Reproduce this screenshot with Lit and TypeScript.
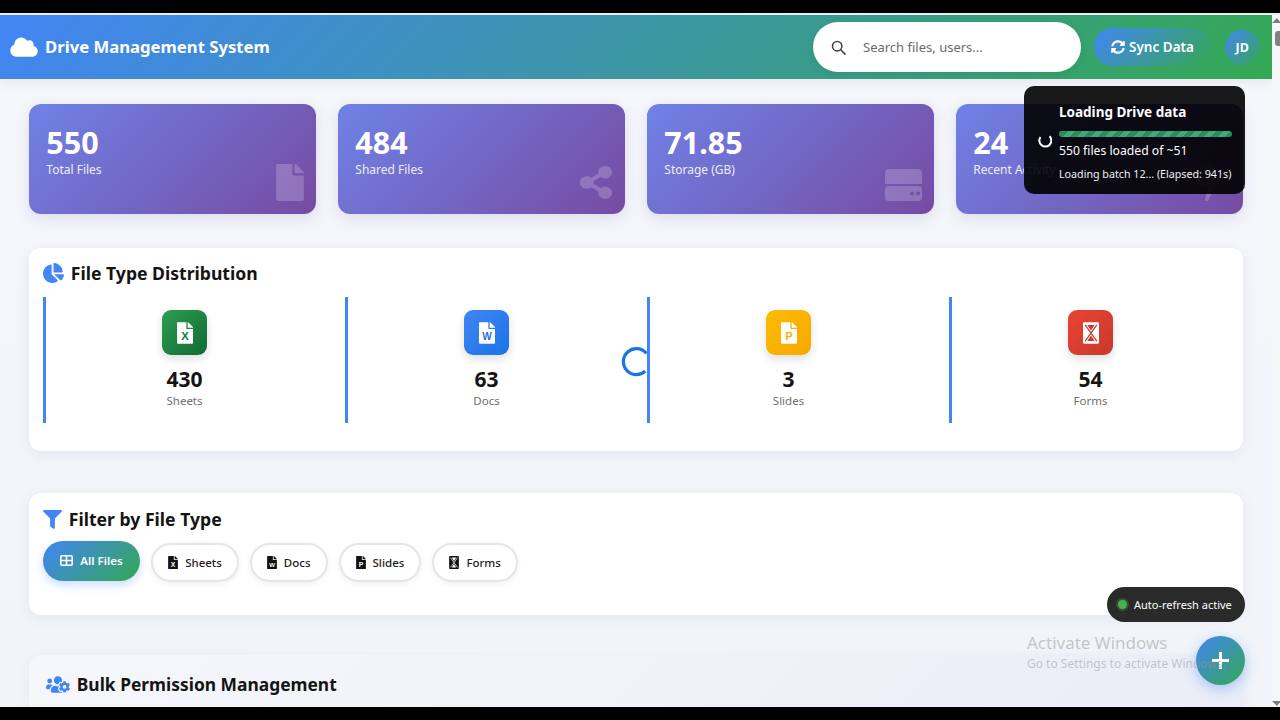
import { LitElement, html, css, svg } from "lit";
import { customElement } from "lit/decorators.js";

const FILE = "M224 136V0H24C10.7 0 0 10.7 0 24v464c0 13.3 10.7 24 24 24h336c13.3 0 24-10.7 24-24V160H248c-13.2 0-24-10.8-24-24zm160-14.1v6.1H256V0h6.1c6.4 0 12.5 2.5 17 7l97.9 98c4.5 4.5 7 10.6 7 16.9z";
const SHARE = "M352 320c-22.608 0-43.387 7.819-59.79 20.895l-102.486-64.054a96.551 96.551 0 0 0 0-41.683l102.486-64.054C308.613 184.181 329.392 192 352 192c53.019 0 96-42.981 96-96S405.019 0 352 0s-96 42.981-96 96c0 7.158.79 14.13 2.276 20.841L155.79 180.895C139.387 167.819 118.608 160 96 160c-53.019 0-96 42.981-96 96s42.981 96 96 96c22.608 0 43.387-7.819 59.79-20.895l102.486 64.054A96.301 96.301 0 0 0 256 416c0 53.019 42.981 96 96 96s96-42.981 96-96-42.981-96-96-96z";
const CLOUD = "M537.6 226.6c4.1-10.7 6.4-22.4 6.4-34.6 0-53-43-96-96-96-19.7 0-38.1 6-53.3 16.2C367 64.2 315.3 32 256 32c-88.4 0-160 71.6-160 160 0 2.7.1 5.4.2 8.1C40.2 219.8 0 273.2 0 336c0 79.5 64.5 144 144 144h368c70.7 0 128-57.3 128-128 0-61.9-44-113.6-102.4-125.4z";
const SYNC = "M370.72 133.28C339.458 104.008 298.888 87.962 255.848 88c-77.458.068-144.328 53.178-162.791 126.85-1.344 5.363-6.122 9.15-11.651 9.15H24.103c-7.498 0-13.194-6.807-11.807-14.176C33.933 94.924 134.813 8 256 8c66.448 0 126.791 26.136 171.315 68.685L463.03 40.97C478.149 25.851 504 36.559 504 57.941V192c0 13.255-10.745 24-24 24H345.941c-21.382 0-32.09-25.851-16.971-40.971l41.75-41.749zM32 296h134.059c21.382 0 32.09 25.851 16.971 40.971l-41.75 41.75c31.262 29.273 71.835 45.319 114.876 45.28 77.418-.07 144.315-53.144 162.787-126.849 1.344-5.363 6.122-9.15 11.651-9.15h57.304c7.498 0 13.194 6.807 11.807 14.176C478.067 417.076 377.187 504 256 504c-66.448 0-126.791-26.136-171.315-68.685L48.97 471.03C33.851 486.149 8 475.441 8 454.059V320c0-13.255 10.745-24 24-24z";
const PIE = "M527.79 288H290.5l158.03 158.03c6.04 6.04 15.98 6.53 22.19 .68 38.7-36.46 65.32-85.61 73.13-140.86 1.34-9.46-6.51-17.85-16.06-17.85zm-15.83-64.8C503.72 103.74 408.26 8.28 288.8 .04 279.68-.59 272 7.1 272 16.24V240h223.77c9.14 0 16.82-7.68 16.19-16.8zM224 288V50.71c0-9.55-8.39-17.4-17.84-16.06C86.99 51.49-4.1 155.6 .14 280.37 4.5 408.51 114.83 513.59 243.03 511.98c50.4-.63 96.97-16.87 135.26-44.03 7.9-5.6 8.42-17.23 1.57-24.08L224 288z";
const FILTER = "M487.976 0H24.028C2.71 0-8.047 25.866 7.058 40.971L192 225.941V432c0 7.831 3.821 15.17 10.237 19.662l80 55.98C298.02 518.69 320 507.493 320 487.98V225.941l184.947-184.97C520.021 25.896 509.338 0 487.976 0z";
const USERS = "M610.5 341.3c2.6-14.1 2.6-28.5 0-42.6l25.8-14.9c3-1.7 4.3-5.2 3.3-8.5-6.7-21.6-18.2-41.2-33.2-57.4-2.3-2.5-6-3.1-9-1.4l-25.8 14.9c-10.9-9.3-23.4-16.5-36.9-21.3v-29.8c0-3.4-2.4-6.4-5.7-7.1-22.3-5-45-4.8-66.2 0-3.3.7-5.7 3.7-5.7 7.1v29.8c-13.5 4.8-26 12-36.9 21.3l-25.8-14.9c-2.9-1.7-6.7-1.1-9 1.4-15 16.2-26.5 35.8-33.2 57.4-1 3.3.4 6.8 3.3 8.5l25.8 14.9c-2.6 14.1-2.6 28.5 0 42.6l-25.8 14.9c-3 1.7-4.3 5.2-3.3 8.5 6.7 21.6 18.2 41.1 33.2 57.4 2.3 2.5 6 3.1 9 1.4l25.8-14.9c10.9 9.3 23.4 16.5 36.9 21.3v29.8c0 3.4 2.4 6.4 5.7 7.1 22.3 5 45 4.8 66.2 0 3.3-.7 5.7-3.7 5.7-7.1v-29.8c13.5-4.8 26-12 36.9-21.3l25.8 14.9c2.9 1.7 6.7 1.1 9-1.4 15-16.2 26.5-35.8 33.2-57.4 1-3.3-.4-6.8-3.3-8.5l-25.8-14.9zM496 368.5c-26.8 0-48.5-21.8-48.5-48.5s21.8-48.5 48.5-48.5 48.5 21.8 48.5 48.5-21.7 48.5-48.5 48.5zM96 224c35.3 0 64-28.7 64-64s-28.7-64-64-64-64 28.7-64 64 28.7 64 64 64zm224 32c1.9 0 3.7-.5 5.6-.6 8.3-21.7 20.5-42.1 36.3-59.2 7.4-8 17.9-12.6 28.9-12.6 6.9 0 13.7 1.8 19.6 5.3l7.9 4.6c.8-.5 1.6-.9 2.4-1.4 7-14.6 11.2-30.8 11.2-48 0-61.9-50.1-112-112-112S208 82.1 208 144c0 61.9 50.1 112 112 112zm105.2 194.5c-2.3-1.2-4.6-2.6-6.8-3.9-8.2 4.8-15.3 9.8-27.5 9.8-10.9 0-21.4-4.6-28.9-12.6-18.3-19.8-32.3-43.9-40.2-69.6-10.7-34.5 24.9-49.7 25.8-50.3-.1-2.6-.1-5.2 0-7.8l-7.9-4.6c-3.8-2.2-7-5-9.8-8.1-3.3.2-6.5.6-9.8.6-24.6 0-47.6-6-68.5-16h-8.3C179.6 288 128 339.6 128 403.2V432c0 26.5 21.5 48 48 48h255.4c-3.7-6-6.2-12.8-6.2-20.3v-9.2zM173.1 274.6C161.5 263.1 145.6 256 128 256H64c-35.3 0-64 28.7-64 64v32c0 17.7 14.3 32 32 32h65.9c6.3-47.4 34.9-87.3 75.2-109.4z";
const BOLT = "M296 160H180.6l42.6-129.8C227.2 15 215.7 0 200 0H56C44 0 33.8 8.9 32.2 20.8l-32 240C-2.7 278.9 11.3 295 24 295h118.7L96.6 489.7c-3.6 15.2 8 22.3 23.3 22.3 8.4 0 16.4-4.4 20.8-12l176-304c9.3-15.9-2.2-36-20.7-36z";

type Kind = "x" | "w" | "p" | "f";

function mark(kind: Kind, color: string) {
  if (kind === "f") {
    return svg`<path d="M104 62h176l-88 132zM104 450h176l-88-132z" fill="${color}"/><path d="M52 62l280 388M332 62L52 450" stroke="${color}" stroke-width="30"/>`;
  }
  const ch = kind === "x" ? "X" : kind === "w" ? "W" : "P";
  return svg`<text x="192" y="430" text-anchor="middle" font-family="'Liberation Sans',sans-serif" font-weight="700" font-size="${kind === "w" ? 240 : 270}" fill="${color}">${ch}</text>`;
}

function docIcon(kind: Kind, sheet: string, ink: string, cls: string) {
  if (kind === "f") {
    return html`<svg class="${cls}" viewBox="0 0 384 512"><rect width="384" height="512" rx="28" fill="${sheet}"/>${mark(kind, ink)}</svg>`;
  }
  return html`<svg class="${cls}" viewBox="0 0 384 512"><path d="${FILE}" fill="${sheet}"/>${mark(kind, ink)}</svg>`;
}

const STATS = [
  { value: "550", label: "Total Files", icon: "file" },
  { value: "484", label: "Shared Files", icon: "share" },
  { value: "71.85", label: "Storage (GB)", icon: "hdd" },
  { value: "24", label: "Recent Activity", icon: "bolt" },
];

const DIST: { kind: Kind; n: string; label: string; cls: string; ink: string }[] = [
  { kind: "x", n: "430", label: "Sheets", cls: "sheets", ink: "#157a3c" },
  { kind: "w", n: "63", label: "Docs", cls: "docs", ink: "#2a6fe0" },
  { kind: "p", n: "3", label: "Slides", cls: "slides", ink: "#f6b400" },
  { kind: "f", n: "54", label: "Forms", cls: "forms", ink: "#c8392b" },
];

const FILTERS: { kind: Kind; label: string }[] = [
  { kind: "x", label: "Sheets" },
  { kind: "w", label: "Docs" },
  { kind: "p", label: "Slides" },
  { kind: "f", label: "Forms" },
];

@customElement("app-root")
export class AppRoot extends LitElement {
  static styles = css`
    :host {
      display: block;
      width: 1280px;
      height: 720px;
      position: relative;
      overflow: hidden;
      background: #000;
      font-family: "Noto Sans", "Open Sans", sans-serif;
      color: #111;
    }
    * { box-sizing: border-box; }
    .frame { display: flex; flex-direction: column; height: 720px; padding: 13px 0; }
    .frame-line { height: 2px; background: #e9edf2; flex: none; }
    .window { flex: 1; min-height: 0; display: flex; overflow: hidden; background: #f5f7fa; }
    .page { width: 1272px; flex: none; overflow: hidden; background: linear-gradient(180deg, #f5f7fa 0%, #f2f4fa 100%); }
    .scrollbar {
      flex: 1; background: #f6f7f8; display: flex; flex-direction: column;
      align-items: flex-end; padding-top: 3px;
    }
    .sb-up {
      width: 0; height: 0; margin-right: -1px;
      border-left: 5px solid transparent; border-right: 4px solid transparent; border-bottom: 5px solid #7d7d7d;
    }
    .sb-thumb { width: 5px; height: 15px; margin-top: 8px; background: #828282; border-radius: 3px 0 0 3px; }
    .sb-space { flex: 1; }
    .sb-down {
      width: 0; height: 0; margin-right: -1px; margin-bottom: 1px;
      border-left: 5px solid transparent; border-right: 4px solid transparent; border-top: 5px solid #7d7d7d;
    }

    header {
      height: 64px; display: flex; align-items: center; padding: 0 12.5px 0 10px;
      background: linear-gradient(135deg, #4285f4 0%, #34a853 100%);
      box-shadow: 0 2px 12px rgba(0, 0, 0, 0.08);
    }
    .brand { display: flex; align-items: center; gap: 7px; color: #fff; font-size: 16.7px; font-weight: 700; flex: 1; }
    .brand span { margin-top: -1px; }
    .brand svg { width: 28px; height: 22px; fill: #fff; }
    .search {
      width: 268px; height: 50px; border-radius: 25px; background: #fff; display: flex; align-items: center;
      padding-left: 18px; gap: 17px; color: #6b6b6b; font-size: 13px;
      box-shadow: 0 2px 8px rgba(0, 0, 0, 0.08);
    }
    .search svg { width: 15px; height: 15px; flex: none; }
    .sync {
      margin-left: 13px; width: 117px; height: 38px; border-radius: 19px; display: flex; align-items: center;
      justify-content: center; gap: 4px; color: #fff; font-size: 13.5px; font-weight: 600;
      background: linear-gradient(135deg, #4285f4 0%, #34a853 100%);
    }
    .sync svg { width: 14px; height: 14px; fill: #fff; }
    .avatar {
      margin-left: 14px; width: 34.5px; height: 35px; border-radius: 50%; display: flex; align-items: center;
      justify-content: center; color: #fff; font-size: 12.5px; font-weight: 700;
      background: linear-gradient(135deg, #4285f4 0%, #34a853 100%);
    }

    main { padding: 25px 28.8px 0; }
    .stats { display: grid; grid-template-columns: repeat(4, 1fr); gap: 21.6px; margin-bottom: 34px; }
    .stat {
      position: relative; height: 110px; border-radius: 12px; padding: 18.5px 17.5px; color: #fff;
      background: linear-gradient(135deg, #6f82e6 0%, #764ba2 100%);
      box-shadow: 0 4px 14px rgba(110, 100, 200, 0.18);
    }
    .stat-value { font-size: 30.5px; font-weight: 700; line-height: 38px; }
    .stat-label { font-size: 12px; line-height: 16px; margin-top: 1.5px; opacity: 0.88; }
    .stat-icon { position: absolute; right: 12px; bottom: 13px; fill: rgba(255, 255, 255, 0.2); display: block; }
    .stat-icon.file { width: 28px; height: 37px; }
    .stat-icon.share { width: 32px; height: 33px; bottom: 15px; right: 13px; }
    .stat-icon.hdd { width: 37px; height: 32px; }
    .stat-icon.bolt { width: 23px; height: 36px; right: 22px; }

    .panel {
      background: #fff; border-radius: 12px; padding: 14px;
      box-shadow: 0 3px 14px rgba(30, 40, 80, 0.07);
    }
    .title { display: flex; align-items: center; font-size: 17.6px; font-weight: 700; color: #141414; line-height: 24px; }
    .title svg { fill: #4285f4; flex: none; }
    .dist-panel { height: 203px; margin-bottom: 42px; padding-top: 13px; }
    .dist-title { gap: 7px; margin-bottom: 12px; }
    .dist-title svg { width: 21px; height: 20px; }
    .dist { display: grid; grid-template-columns: repeat(4, 1fr); gap: 21.6px; }
    .dist-item {
      height: 126px; border-left: 3px solid #4285f4; display: flex; flex-direction: column; align-items: center;
      padding-top: 13px;
    }
    .tile {
      width: 45px; height: 45px; border-radius: 9px; display: flex; align-items: center; justify-content: center;
      box-shadow: 0 4px 10px rgba(0, 0, 0, 0.13);
    }
    .tile.sheets { background: linear-gradient(135deg, #2f9d50, #0f6a34); }
    .tile.docs { background: linear-gradient(135deg, #4285f4, #1a73e8); }
    .tile.slides { background: linear-gradient(135deg, #fbbc04, #f9a800); }
    .tile.forms { background: linear-gradient(135deg, #ea4335, #c8392b); }
    .tile-doc { width: 16px; height: 22px; display: block; }
    .count { font-size: 21px; font-weight: 700; line-height: 28px; margin-top: 10px; color: #151515; }
    .count-label { font-size: 11.5px; line-height: 15px; color: #6f6f6f; }

    .filter-panel { height: 122px; margin-bottom: 40px; }
    .filter-title { gap: 7px; margin-bottom: 10px; }
    .filter-title svg { width: 19px; height: 19px; }
    .chips { display: flex; align-items: center; gap: 11px; }
    .chip {
      height: 39px; border-radius: 20px; border: 2px solid #e6e6e6; background: #fff; display: flex; align-items: center;
      gap: 7px; padding: 0 15px; font-size: 11.5px; font-weight: 500; color: #1d1d1d;
      box-shadow: 0 2px 6px rgba(0, 0, 0, 0.06); margin-top: 2px;
    }
    .chip-doc { width: 10px; height: 13px; display: block; }
    .chip.active {
      height: 40px; margin-top: -2px; border: 0; padding: 0 17.5px; gap: 7px; color: #fff; font-weight: 600;
      background: linear-gradient(135deg, #4285f4 0%, #34a853 100%);
      box-shadow: 0 4px 10px rgba(66, 133, 244, 0.28);
    }
    .chip.active svg { width: 13px; height: 11px; display: block; }

    .bulk {
      height: 90px; border-radius: 12px; padding: 17px 17px;
      background: linear-gradient(135deg, #f6f7fb 0%, #eaedf7 100%);
      box-shadow: 0 3px 14px rgba(30, 40, 80, 0.05);
    }
    .bulk-title { gap: 7px; font-size: 17.4px; }
    .bulk-title svg { width: 24px; height: 19px; }

    .spinner { position: absolute; left: 621px; top: 347px; width: 30px; height: 30px; display: block; }
    .toast {
      position: absolute; left: 1024px; top: 86px; width: 221px; height: 108px; border-radius: 10px; color: #fff;
      background: rgba(0, 0, 0, 0.9); display: flex; align-items: center; gap: 7px; padding: 5px 13px 0 14px;
    }
    .toast-spin { width: 14px; height: 14px; flex: none; display: block; margin-top: -3px; }
    .toast-body { flex: 1; min-width: 0; }
    .toast-title { font-size: 13.5px; font-weight: 700; line-height: 18px; margin-bottom: 10px; }
    .bar {
      height: 5.5px; border-radius: 3px; margin-bottom: 5px;
      background: repeating-linear-gradient(-45deg, #23905a 0 5px, #46a67f 5px 10px);
    }
    .toast-line { font-size: 12.2px; line-height: 18px; margin-bottom: 6px; }
    .toast-sub { font-size: 10.7px; line-height: 16px; opacity: 0.95; white-space: nowrap; }

    .auto {
      position: absolute; left: 1107px; top: 587px; width: 138px; height: 35px; border-radius: 18px;
      background: #2a2a2a; color: #fff; font-size: 11px; display: flex; align-items: center; gap: 7px; padding-left: 11px;
      white-space: nowrap;
    }
    .dot { width: 9px; height: 9px; border-radius: 50%; background: #4caf50; box-shadow: 0 0 0 2px rgba(76, 175, 80, 0.3); flex: none; }
    .fab {
      position: absolute; left: 1196px; top: 636px; width: 49px; height: 49px; border-radius: 50%;
      background: linear-gradient(135deg, #4285f4 0%, #34a853 100%); display: flex; align-items: center; justify-content: center;
      box-shadow: 0 4px 14px rgba(66, 133, 244, 0.4);
    }
    .fab svg { width: 17px; height: 17px; display: block; }
    .activate { position: absolute; left: 1027px; top: 632px; color: rgba(150, 150, 150, 0.5); pointer-events: none; white-space: nowrap; }
    .activate-1 { font-size: 17px; line-height: 22px; }
    .activate-2 { font-size: 12px; line-height: 16px; margin-top: 2px; }
  `;

  private statIcon(kind: string) {
    if (kind === "file") return html`<svg class="stat-icon file" viewBox="0 0 384 512"><path d="${FILE}"/></svg>`;
    if (kind === "share") return html`<svg class="stat-icon share" viewBox="0 0 448 512" preserveAspectRatio="none"><path d="${SHARE}"/></svg>`;
    if (kind === "hdd")
      return html`<svg class="stat-icon hdd" viewBox="0 0 37 32">
        <path d="M4 0h29a4 4 0 0 1 4 4v11H0V4a4 4 0 0 1 4-4z"/>
        <path fill-rule="evenodd" d="M4 17h29a4 4 0 0 1 4 4v7a4 4 0 0 1-4 4H4a4 4 0 0 1-4-4v-7a4 4 0 0 1 4-4zm21 7.5a2 2 0 1 0 4 0 2 2 0 1 0-4 0zm6 0a2 2 0 1 0 4 0 2 2 0 1 0-4 0z"/>
      </svg>`;
    return html`<svg class="stat-icon bolt" viewBox="0 0 320 512"><path d="${BOLT}"/></svg>`;
  }

  render() {
    return html`
      <div class="frame">
        <div class="frame-line"></div>
        <div class="window">
          <div class="page">
            <header>
              <div class="brand">
                <svg viewBox="0 0 640 512"><path d="${CLOUD}"/></svg>
                <span>Drive Management System</span>
              </div>
              <div class="search">
                <svg viewBox="0 0 16 16" fill="none" stroke="#444" stroke-width="1.7" stroke-linecap="round">
                  <circle cx="6.6" cy="6.6" r="5"/><path d="M10.4 10.4 15 15"/>
                </svg>
                <span>Search files, users...</span>
              </div>
              <div class="sync">
                <svg viewBox="0 0 512 512"><path d="${SYNC}"/></svg>
                <span>Sync Data</span>
              </div>
              <div class="avatar">JD</div>
            </header>
            <main>
              <section class="stats">
                ${STATS.map(
                  (s) => html`<div class="stat">
                    <div class="stat-value">${s.value}</div>
                    <div class="stat-label">${s.label}</div>
                    ${this.statIcon(s.icon)}
                  </div>`
                )}
              </section>

              <section class="panel dist-panel">
                <div class="title dist-title">
                  <svg viewBox="0 0 544 512"><path d="${PIE}"/></svg>
                  <span>File Type Distribution</span>
                </div>
                <div class="dist">
                  ${DIST.map(
                    (d) => html`<div class="dist-item">
                      <div class="tile ${d.cls}">${docIcon(d.kind, "#fff", d.ink, "tile-doc")}</div>
                      <div class="count">${d.n}</div>
                      <div class="count-label">${d.label}</div>
                    </div>`
                  )}
                </div>
              </section>

              <section class="panel filter-panel">
                <div class="title filter-title">
                  <svg viewBox="0 0 512 512"><path d="${FILTER}"/></svg>
                  <span>Filter by File Type</span>
                </div>
                <div class="chips">
                  <div class="chip active">
                    <svg viewBox="0 0 13 11" fill="none" stroke="#fff" stroke-width="1.6">
                      <rect x=".8" y=".8" width="11.4" height="9.4" rx="1.2"/><path d="M6.5 1v9M1 5.5h11"/>
                    </svg>
                    <span>All Files</span>
                  </div>
                  ${FILTERS.map(
                    (f) => html`<div class="chip">
                      ${docIcon(f.kind, "#111", "#fff", "chip-doc")}
                      <span>${f.label}</span>
                    </div>`
                  )}
                </div>
              </section>

              <section class="bulk">
                <div class="title bulk-title">
                  <svg viewBox="0 0 640 512"><path d="${USERS}"/></svg>
                  <span>Bulk Permission Management</span>
                </div>
              </section>
            </main>
          </div>
          <div class="scrollbar">
            <div class="sb-up"></div>
            <div class="sb-thumb"></div>
            <div class="sb-space"></div>
            <div class="sb-down"></div>
          </div>
        </div>
      </div>

      <svg class="spinner" viewBox="0 0 30 30" fill="none" stroke="#1a73e8" stroke-width="3.2" stroke-linecap="butt">
        <path d="M25.5 6.5A13 13 0 1 0 24.2 24.2"/>
      </svg>

      <div class="fab">
        <svg viewBox="0 0 17 17" fill="none" stroke="#fff" stroke-width="3"><path d="M8.5 0v17M0 8.5h17"/></svg>
      </div>
      <div class="activate">
        <div class="activate-1">Activate Windows</div>
        <div class="activate-2">Go to Settings to activate Windows.</div>
      </div>

      <div class="toast">
        <svg class="toast-spin" viewBox="0 0 14 14" fill="none" stroke="#fff" stroke-width="2">
          <path d="M11.5 2.2A6 6 0 1 1 2.5 3"/>
        </svg>
        <div class="toast-body">
          <div class="toast-title">Loading Drive data</div>
          <div class="bar"></div>
          <div class="toast-line">550 files loaded of ~51</div>
          <div class="toast-sub">Loading batch 12... (Elapsed: 941s)</div>
        </div>
      </div>

      <div class="auto"><span class="dot"></span><span>Auto-refresh active</span></div>
    `;
  }
}
